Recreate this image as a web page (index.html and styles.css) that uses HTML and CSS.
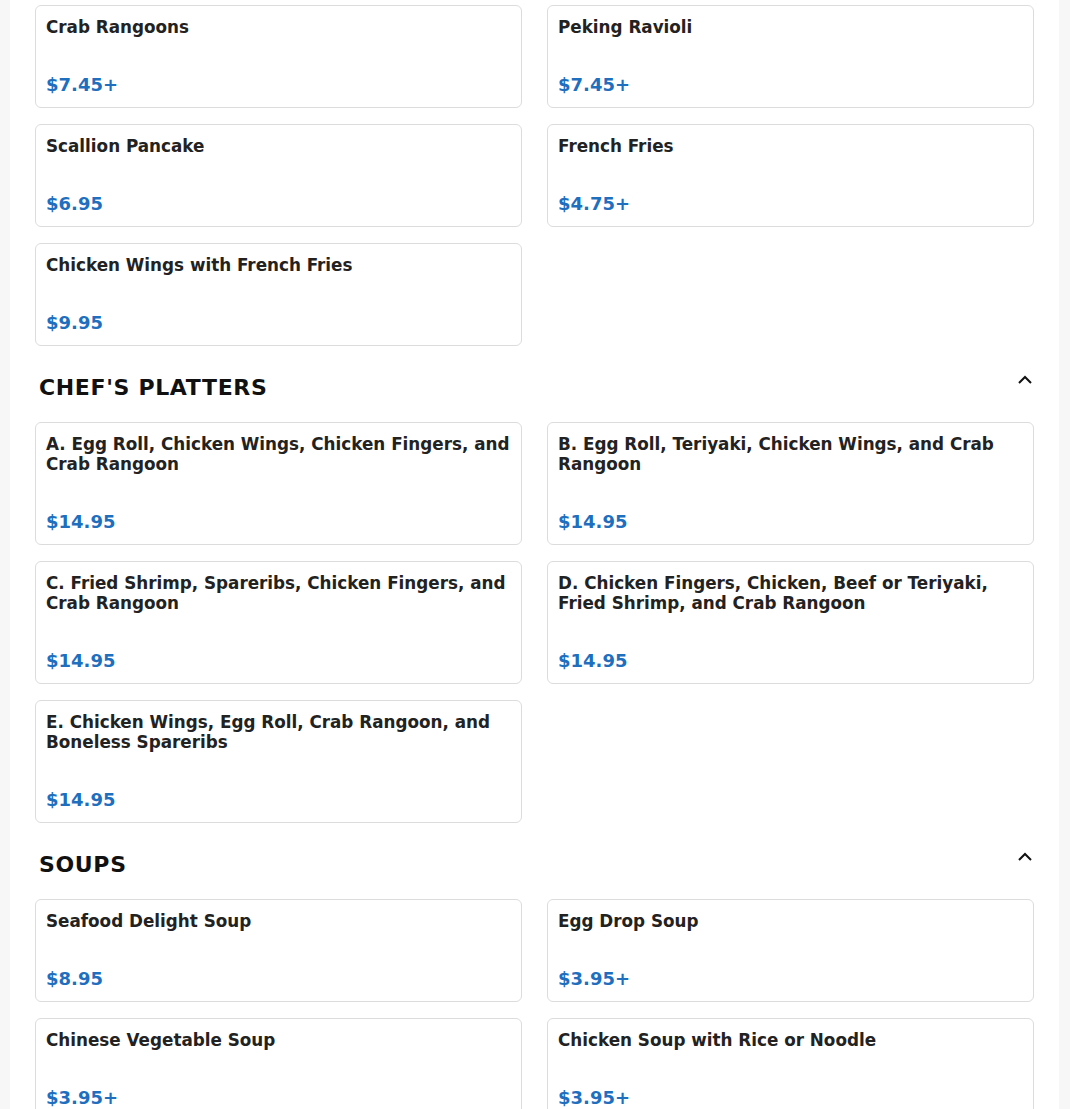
FILE: index.html
```html
<!DOCTYPE html>
<html>
<head>
<meta charset="utf-8">
<link rel="stylesheet" href="styles.css">
</head>
<body>
<div class="menu">
  <section class="section first">
    <div class="grid">
      <div class="card"><div class="name">Crab Rangoons</div><div class="price">$7.45+</div></div>
      <div class="card"><div class="name">Peking Ravioli</div><div class="price">$7.45+</div></div>
      <div class="card"><div class="name">Scallion Pancake</div><div class="price">$6.95</div></div>
      <div class="card"><div class="name">French Fries</div><div class="price">$4.75+</div></div>
      <div class="card"><div class="name">Chicken Wings with French Fries</div><div class="price">$9.95</div></div>
    </div>
  </section>
  <section class="section">
    <div class="head">
      <h2 class="title">CHEF'S PLATTERS</h2>
      <svg class="chev" width="16" height="10" viewBox="0 0 16 10"><polyline points="2,8 8,2 14,8" fill="none" stroke="#111" stroke-width="2"/></svg>
    </div>
    <div class="grid">
      <div class="card"><div class="name">A. Egg Roll, Chicken Wings, Chicken Fingers, and Crab Rangoon</div><div class="price">$14.95</div></div>
      <div class="card"><div class="name">B. Egg Roll, Teriyaki, Chicken Wings, and Crab Rangoon</div><div class="price">$14.95</div></div>
      <div class="card"><div class="name">C. Fried Shrimp, Spareribs, Chicken Fingers, and Crab Rangoon</div><div class="price">$14.95</div></div>
      <div class="card"><div class="name">D. Chicken Fingers, Chicken, Beef or Teriyaki, Fried Shrimp, and Crab Rangoon</div><div class="price">$14.95</div></div>
      <div class="card"><div class="name">E. Chicken Wings, Egg Roll, Crab Rangoon, and Boneless Spareribs</div><div class="price">$14.95</div></div>
    </div>
  </section>
  <section class="section">
    <div class="head">
      <h2 class="title">SOUPS</h2>
      <svg class="chev" width="16" height="10" viewBox="0 0 16 10"><polyline points="2,8 8,2 14,8" fill="none" stroke="#111" stroke-width="2"/></svg>
    </div>
    <div class="grid">
      <div class="card"><div class="name">Seafood Delight Soup</div><div class="price">$8.95</div></div>
      <div class="card"><div class="name">Egg Drop Soup</div><div class="price">$3.95+</div></div>
      <div class="card"><div class="name">Chinese Vegetable Soup</div><div class="price">$3.95+</div></div>
      <div class="card"><div class="name">Chicken Soup with Rice or Noodle</div><div class="price">$3.95+</div></div>
    </div>
  </section>
</div>
</body>
</html>
```
FILE: styles.css
```css
html, body {
  margin: 0;
  padding: 0;
  background: #f7f7f7;
  font-family: "DejaVu Sans", sans-serif;
  color: #222;
}
.menu {
  background: #fff;
  margin: 0 11px 0 10px;
  padding: 5px 25px 40px 25px;
  min-height: 1200px;
}
.grid {
  display: grid;
  grid-template-columns: 1fr 1fr;
  column-gap: 25px;
  row-gap: 16px;
}
.card {
  border: 1px solid #dcdcdc;
  border-radius: 6px;
  padding: 11px 10px 11px 10px;
  display: flex;
  flex-direction: column;
}
.name {
  font-weight: bold;
  font-size: 16.8px;
  line-height: 20px;
  color: #222;
}
.price {
  margin-top: 37px;
  font-weight: bold;
  font-size: 18px;
  line-height: 22px;
  color: #1f6fbf;
}
.head {
  display: flex;
  justify-content: space-between;
  align-items: flex-start;
  margin: 25px 0 17px 0;
  padding: 0 1px 0 4px;
}
.title {
  margin: 0;
  font-size: 22px;
  line-height: 34px;
  font-weight: bold;
  letter-spacing: 0.65px;
  color: #111;
}
.chev {
  margin-top: 4px;
}
```
